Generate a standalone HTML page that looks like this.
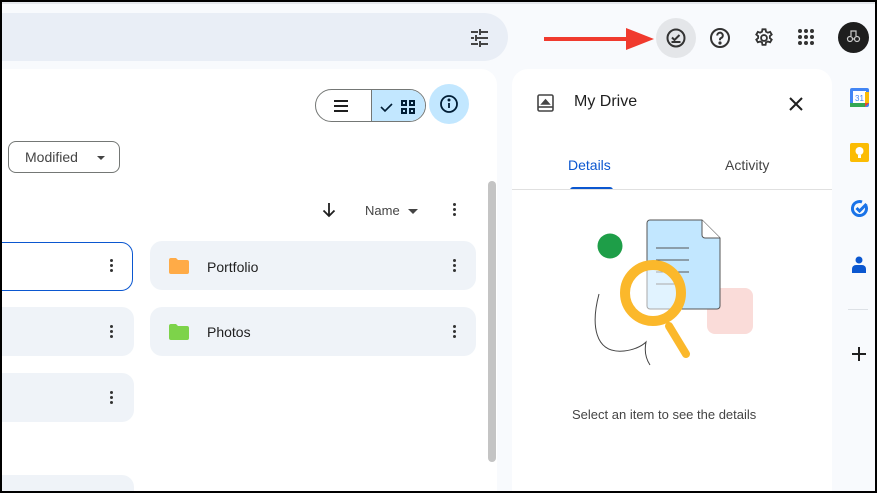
<!DOCTYPE html>
<html><head><style>
*{margin:0;padding:0;box-sizing:border-box}
html,body{width:877px;height:493px;overflow:hidden}
body{background:#000;font-family:"Liberation Sans",Arial,sans-serif;position:relative}
#app{position:absolute;left:2px;top:2px;width:873px;height:489px;background:#f8fafd;overflow:hidden}
.abs{position:absolute}
.txt{color:#1f1f1f;font-size:14px}
.card{position:absolute;background:#eff3f8;border-radius:12px;height:49px}
.dots{position:absolute;width:3px}
.dots i{display:block;width:3px;height:3px;border-radius:50%;background:#333;margin-bottom:2px}
</style></head><body>
<div id="app">
 <div class="abs" style="left:0;top:0;width:873px;height:2px;background:#e4e7ec"></div>
 <div class="abs" style="left:-2px;top:11px;width:508px;height:48px;background:#e9eef6;border-radius:0 24px 24px 0"></div>
 <svg class="abs" style="left:468px;top:26px" width="20" height="20" viewBox="0 0 20 20" fill="#444"><rect x="1" y="3" width="7" height="2"/><rect x="11" y="3" width="7" height="2"/><rect x="9" y="1" width="2" height="6"/><rect x="1" y="9" width="3" height="2"/><rect x="7" y="9" width="11" height="2"/><rect x="5" y="7" width="2" height="6"/><rect x="1" y="15" width="7" height="2"/><rect x="11" y="15" width="7" height="2"/><rect x="9" y="13" width="2" height="6"/></svg>
 <svg class="abs" style="left:540px;top:24px" width="115" height="26"><rect x="2" y="11" width="85" height="4" fill="#f03a2e"/><polygon points="84,2 112,13 84,24" fill="#f03a2e"/></svg>
 <div class="abs" style="left:654px;top:16px;width:40px;height:40px;border-radius:50%;background:#e4e6e9"></div>
 <svg class="abs" style="left:663px;top:25px" width="22" height="22" viewBox="0 0 22 22" fill="none" stroke="#333" stroke-width="2"><circle cx="11" cy="11" r="8.5"/><path d="M7 10.5l2.5 2.5 5-5M6.5 15h9"/></svg>
 <svg class="abs" style="left:707px;top:25px" width="22" height="22" viewBox="0 0 22 22" fill="none" stroke="#333" stroke-width="2"><circle cx="11" cy="11" r="9"/><path d="M8.2 8.5a2.8 2.8 0 1 1 3.8 2.6c-.7.3-1 .8-1 1.5v.6"/><circle cx="11" cy="16" r=".6" fill="#333"/></svg>
 <svg class="abs" style="left:751px;top:25px" width="22" height="22" viewBox="0 0 24 24" fill="none" stroke="#333" stroke-width="2"><circle cx="12" cy="12" r="3.2"/><path d="M10.3 2.5h3.4l.5 2.6 2 1.1 2.5-.9 1.7 2.9-2 1.7v2.2l2 1.7-1.7 2.9-2.5-.9-2 1.1-.5 2.6h-3.4l-.5-2.6-2-1.1-2.5.9-1.700-2.9 2-1.7v-2.2l-2-1.7 1.7-2.9 2.5.9 2-1.1z"/></svg>
 <svg class="abs" style="left:795px;top:26px" width="18" height="18" fill="#333"><circle cx="3" cy="3" r="2"/><circle cx="9" cy="3" r="2"/><circle cx="15" cy="3" r="2"/><circle cx="3" cy="9" r="2"/><circle cx="9" cy="9" r="2"/><circle cx="15" cy="9" r="2"/><circle cx="3" cy="15" r="2"/><circle cx="9" cy="15" r="2"/><circle cx="15" cy="15" r="2"/></svg>
 <div class="abs" style="left:836px;top:20px;width:31px;height:31px;border-radius:50%;background:#1e1e1e"></div>
 <svg class="abs" style="left:843px;top:26px" width="17" height="17" fill="none" stroke="#ccc" stroke-width="1.2"><circle cx="5" cy="11" r="2.5"/><circle cx="12" cy="11" r="2.5"/><path d="M7.5 11h2M6 8V3h5v5"/></svg>

 <div class="abs" style="left:-2px;top:67px;width:497px;height:422px;background:#fff;border-radius:0 16px 0 0"></div>
 <div class="abs" style="left:313px;top:87px;width:111px;height:33px;border:1px solid #747775;border-radius:17px;overflow:hidden;background:#fff">
  <div class="abs" style="left:55px;top:0;width:56px;height:33px;background:#c2e7ff;border-left:1px solid #747775"></div>
  <svg class="abs" style="left:18px;top:9px" width="16" height="14" fill="#1f1f1f"><rect y="1" width="14" height="2"/><rect y="6" width="14" height="2"/><rect y="11" width="14" height="2"/></svg>
  <svg class="abs" style="left:64px;top:9px" width="40" height="16"><path d="M1 8l4 4 7-7" stroke="#001d35" stroke-width="1.6" fill="none"/><g fill="none" stroke="#001d35" stroke-width="2"><rect x="22" y="2" width="4" height="4"/><rect x="30" y="2" width="4" height="4"/><rect x="22" y="10" width="4" height="4"/><rect x="30" y="10" width="4" height="4"/></g></svg>
 </div>
 <div class="abs" style="left:427px;top:82px;width:40px;height:40px;border-radius:50%;background:#c2e7ff"></div>
 <svg class="abs" style="left:437px;top:92px" width="20" height="20" fill="none" stroke="#001d35" stroke-width="1.8"><circle cx="10" cy="10" r="8"/><path d="M10 9v5"/><circle cx="10" cy="6" r=".6" fill="#001d35"/></svg>
 <div class="abs" style="left:6px;top:139px;width:112px;height:32px;border:1px solid #747775;border-radius:8px"></div>
 <div class="abs txt" style="left:23px;top:147px;color:#444">Modified</div>
 <div class="abs" style="left:95px;top:154px;border:4px solid transparent;border-top:4px solid #444;border-bottom:0"></div>
 <svg class="abs" style="left:320px;top:200px" width="14" height="16" fill="none" stroke="#1f1f1f" stroke-width="1.8"><path d="M7 1v13M1.5 8.5L7 14l5.5-5.5"/></svg>
 <div class="abs" style="left:363px;top:201px;font-size:13px;color:#444">Name</div>
 <div class="abs" style="left:406px;top:207px;border:5px solid transparent;border-top:5px solid #444;border-bottom:0"></div>
 <div class="dots" style="left:451px;top:201px"><i></i><i></i><i></i></div>
 <div class="abs" style="left:486px;top:179px;width:8px;height:281px;background:#c4c4c4;border-radius:4px"></div>
 <div class="card" style="left:-20px;top:240px;width:151px;border:1.5px solid #0b57d0;background:#fff"></div>
 <div class="dots" style="left:108px;top:257px"><i></i><i></i><i></i></div>
 <div class="card" style="left:-20px;top:305px;width:152px"></div>
 <div class="dots" style="left:108px;top:323px"><i></i><i></i><i></i></div>
 <div class="card" style="left:-20px;top:371px;width:152px"></div>
 <div class="dots" style="left:108px;top:389px"><i></i><i></i><i></i></div>
 <div class="card" style="left:-20px;top:473px;width:152px;height:16px;border-radius:12px 12px 0 0"></div>
 <div class="card" style="left:148px;top:239px;width:326px"></div>
 <svg class="abs" style="left:167px;top:256px" width="20" height="16"><path d="M0 2a2 2 0 0 1 2-2h5l2 2h9a2 2 0 0 1 2 2v10a2 2 0 0 1-2 2H2a2 2 0 0 1-2-2z" fill="#ffab47"/></svg>
 <div class="abs txt" style="left:205px;top:257px">Portfolio</div>
 <div class="dots" style="left:451px;top:257px"><i></i><i></i><i></i></div>
 <div class="card" style="left:148px;top:305px;width:326px"></div>
 <svg class="abs" style="left:167px;top:322px" width="20" height="16"><path d="M0 2a2 2 0 0 1 2-2h5l2 2h9a2 2 0 0 1 2 2v10a2 2 0 0 1-2 2H2a2 2 0 0 1-2-2z" fill="#7dd34a"/></svg>
 <div class="abs txt" style="left:205px;top:322px">Photos</div>
 <div class="dots" style="left:451px;top:323px"><i></i><i></i><i></i></div>

 <div class="abs" style="left:510px;top:67px;width:320px;height:422px;background:#fff;border-radius:16px 16px 0 0"></div>
 <svg class="abs" style="left:535px;top:92px" width="18" height="19" fill="none" stroke="#444" stroke-width="1.6"><rect x="1" y="1" width="15" height="16" rx="1.5"/><path d="M1 13h15"/><path d="M5 10l3.5-4 3.5 4z" fill="#444"/></svg>
 <div class="abs" style="left:572px;top:91px;font-size:16px;color:#1f1f1f">My Drive</div>
 <svg class="abs" style="left:786px;top:94px" width="16" height="16" stroke="#1f1f1f" stroke-width="2"><path d="M2 2l12 12M14 2L2 14"/></svg>
 <div class="abs" style="left:566px;top:155px;font-size:14px;color:#0b57d0">Details</div>
 <div class="abs" style="left:723px;top:155px;font-size:14px;color:#444">Activity</div>
 <div class="abs" style="left:568px;top:185px;width:43px;height:3px;background:#0b57d0;border-radius:3px 3px 0 0"></div>
 <div class="abs" style="left:510px;top:187px;width:320px;height:1px;background:#e0e0e0"></div>
 <svg class="abs" style="left:587px;top:214px" width="170" height="160" viewBox="68 15 170 160">
  <g transform="translate(-520,-200)">
   <rect x="706" y="287" width="46" height="46" rx="8" fill="#fadcd9"/>
   <circle cx="609" cy="245" r="12.5" fill="#1e9e48"/>
   <path d="M649 219h52l18 18v68a3 3 0 0 1-3 3h-67a3 3 0 0 1-3-3v-83a3 3 0 0 1 3-3z" fill="#c2e7ff" stroke="#555" stroke-width="1"/>
   <path d="M701 219v15a3 3 0 0 0 3 3h15" fill="#fff" stroke="#555" stroke-width="1"/>
   <path d="M655 247h33M655 259h33M655 271h33M655 283h28" stroke="#555" stroke-width="1"/>
   <path d="M668 325l17 28" stroke="#fbb82b" stroke-width="8" stroke-linecap="round"/>
   <circle cx="652" cy="292" r="28" fill="#fff" fill-opacity=".5" stroke="#fbb82b" stroke-width="10"/>
   <path d="M598 293c-8 30-5 60 25 57 10-1 18-5 22-9-2 10 0 17 4 23" fill="none" stroke="#444" stroke-width="1"/>
  </g>
 </svg>
 <div class="abs" style="left:570px;top:405px;font-size:13px;color:#444">Select an item to see the details</div>

 <svg class="abs" style="left:848px;top:86px" width="19" height="19"><rect width="19" height="19" rx="2" fill="#4285f4"/><rect x="3" y="3" width="13" height="12" fill="#fff"/><rect y="15" width="15" height="4" fill="#34a853"/><rect x="15" y="4" width="4" height="11" fill="#fbbc04"/><path d="M15 15h4l-4 4z" fill="#ea4335"/><text x="9.5" y="13" font-size="8" text-anchor="middle" fill="#4285f4" font-family="Liberation Sans">31</text></svg>
 <svg class="abs" style="left:848px;top:141px" width="19" height="19"><rect width="19" height="19" rx="2" fill="#fbbc04"/><circle cx="9.5" cy="8" r="4" fill="#fff"/><rect x="8" y="12" width="3" height="3" fill="#fff"/></svg>
 <svg class="abs" style="left:849px;top:197px" width="18" height="18" fill="none" stroke="#1a73e8" stroke-width="3"><path d="M15 7a7 7 0 1 1-4-4"/><path d="M5.5 9l3 3 7-7"/></svg>
 <svg class="abs" style="left:850px;top:254px" width="14" height="17" fill="#0b57d0"><circle cx="7" cy="4" r="3.5"/><path d="M0 17v-4a4 4 0 0 1 4-4h6a4 4 0 0 1 4 4v4z"/></svg>
 <div class="abs" style="left:846px;top:307px;width:20px;height:1px;background:#dde1e6"></div>
 <svg class="abs" style="left:850px;top:345px" width="14" height="14" stroke="#1f1f1f" stroke-width="2"><path d="M7 0v14M0 7h14"/></svg>
</div>
</body></html>
